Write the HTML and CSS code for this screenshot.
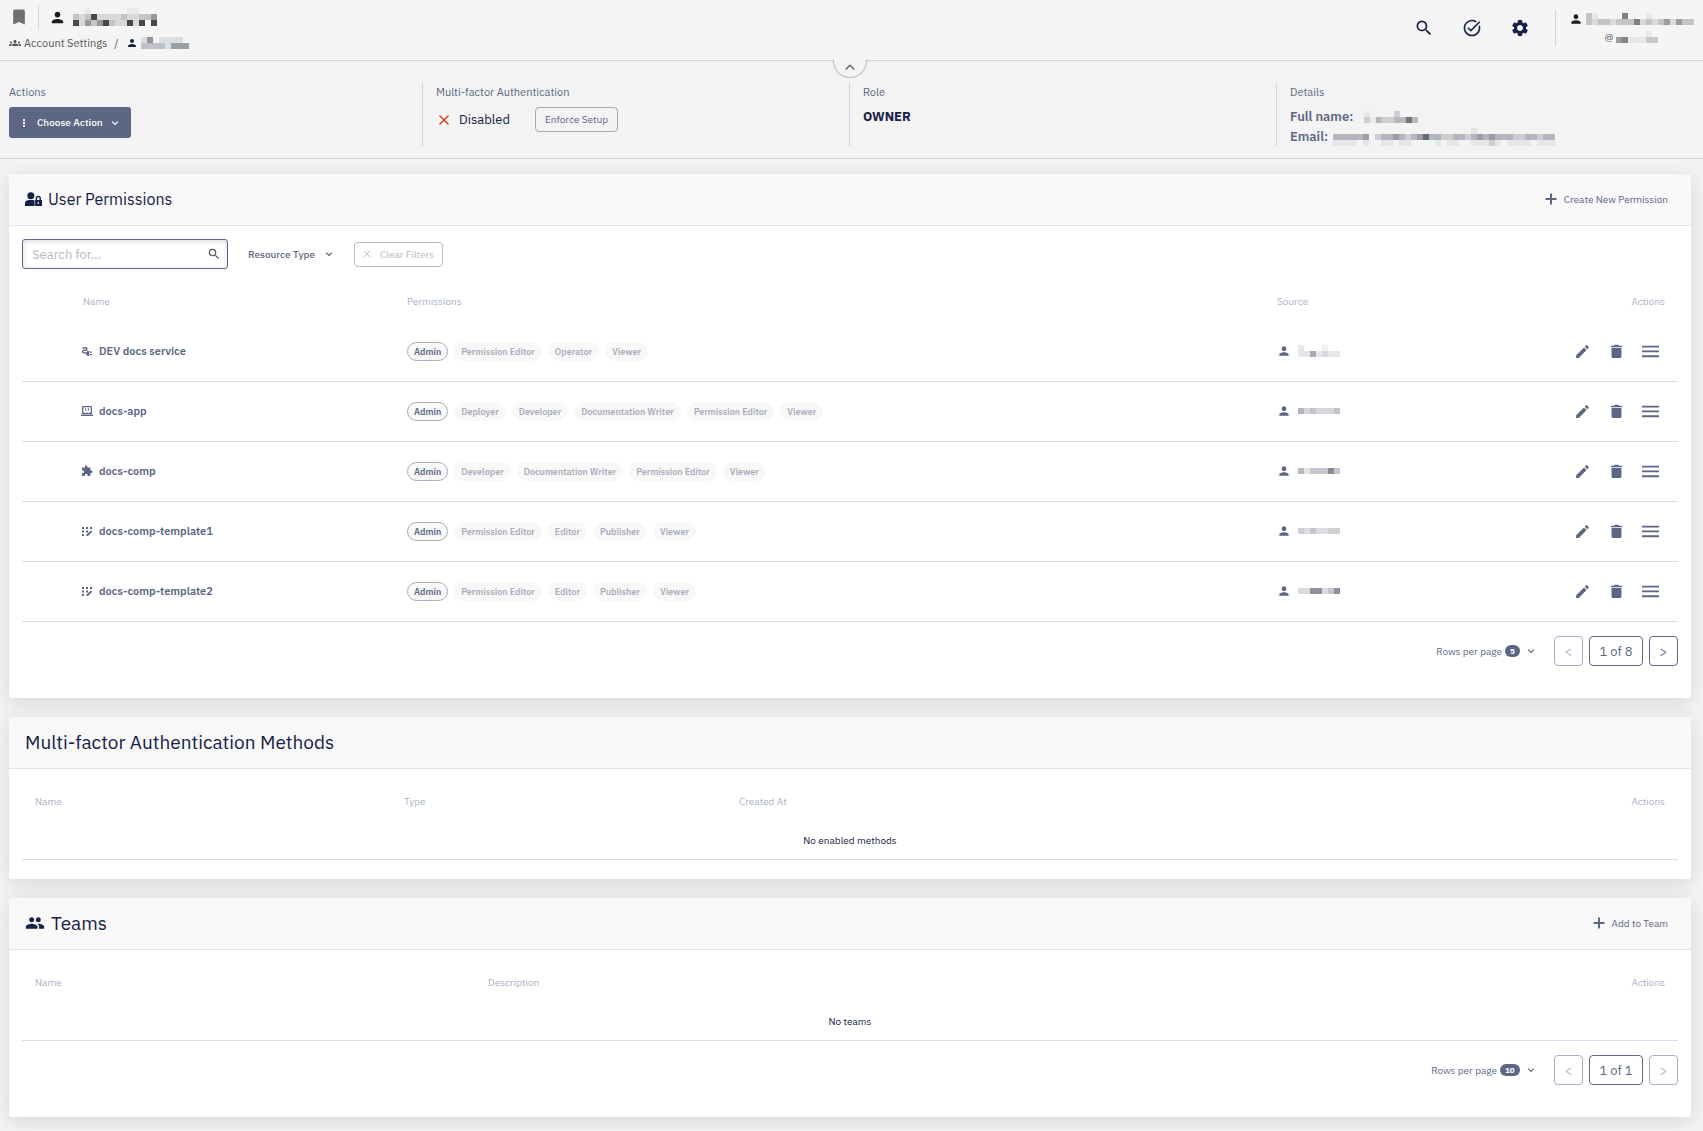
FILE: index.html
```html
<!DOCTYPE html>
<html lang="en">
<head>
  <meta charset="UTF-8">
  <title>Account Settings</title>
  <link rel="stylesheet" href="styles.css">
</head>
<body>

<!-- shared icons -->
<svg class="sprite" aria-hidden="true">
  <symbol id="i-person" viewBox="0 0 24 24"><path d="M12 12c2.21 0 4-1.79 4-4s-1.79-4-4-4-4 1.79-4 4 1.79 4 4 4zm0 2c-2.67 0-8 1.34-8 4v2h16v-2c0-2.66-5.33-4-8-4z"/></symbol>
  <symbol id="i-search" viewBox="0 0 24 24"><path d="M15.5 14h-.79l-.28-.27A6.47 6.47 0 0 0 16 9.5 6.5 6.5 0 1 0 9.5 16c1.61 0 3.09-.59 4.23-1.57l.27.28v.79l5 4.99L20.49 19l-4.99-5zm-6 0C7.01 14 5 11.99 5 9.5S7.01 5 9.5 5 14 7.01 14 9.5 11.99 14 9.5 14z"/></symbol>
  <symbol id="i-edit" viewBox="0 0 24 24"><path d="M3 17.25V21h3.75L17.81 9.94l-3.75-3.75L3 17.25zM20.71 7.04c.39-.39.39-1.02 0-1.41l-2.34-2.34c-.39-.39-1.02-.39-1.41 0l-1.83 1.83 3.75 3.75 1.83-1.83z"/></symbol>
  <symbol id="i-delete" viewBox="0 0 24 24"><path d="M5 19c0 1.1.9 2 2 2h10c1.1 0 2-.9 2-2V7H5v12zM20 4h-4.500l-1-1.500h-5l-1 1.500H4v2h16V4z"/></symbol>
  <symbol id="i-menu" viewBox="0 0 16 16"><path d="M0 2.500h16v1.800H0zM0 7h16v1.800H0zM0 11.500h16v1.800H0z"/></symbol>
  <symbol id="i-down" viewBox="0 0 12 12"><path d="M2.500 4.300 6 7.700l3.500-3.400" fill="none" stroke="currentColor" stroke-width="1.5"/></symbol>
  <symbol id="i-cross" viewBox="0 0 12 12"><path d="M1.500 1.500l9 9m0-9l-9 9" fill="none" stroke="currentColor" stroke-width="1.4"/></symbol>
  <symbol id="i-plus" viewBox="0 0 12 12"><path d="M5 .5h2V5h4.500v2H7v4.500H5V7H.5V5H5z"/></symbol>
  <symbol id="i-template" viewBox="0 0 12 12"><path d="M1 2h2v2H1zM5 2h2v2H5zM9 2h2v2H9zM1 5.500h2v2H1zM5 5.500h2v2H5zM1 9h2v2H1zM10 5.500l1.200 1.200L7 11H5.500V9.600z"/></symbol>
</svg>

<header class="topbar">
  <div class="titles">
    <div class="title-row">
      <button class="icon-btn" aria-label="Bookmark"><svg class="icon-20 bookmark" viewBox="0 0 24 24"><path d="M17 3H7c-1.100 0-2 .9-2 2v16l7-3 7 3V5c0-1.100-.9-2-2-2z"/></svg></button>
      <span class="divider"></span>
      <svg class="icon-16 black"><use href="#i-person"/></svg>
      <svg class="mask" width="84" height="18" viewBox="0 0 14 3">
        <path fill="#eaeaea" d="M2 0h1v1H2zM9 0h2v1H9z"/>
        <path fill="#d9d9d9" d="M0 1h14v1H0zM1 2h1v1H1zM7 2h2v1H7zM10 2h1v1h-1z"/>
        <path fill="#c4c4c4" d="M0 1h1v1H0zM2 1h1v1H2zM8 1h1v1H8zM11 1h2v1h-2zM3 2h1v1H3zM6 2h1v1H6z"/>
        <path fill="#999" d="M13 1h1v1h-1zM2 2h1v1H2zM4 2h1v1H4z"/>
        <path fill="#484848" d="M3 1h1v1H3zM0 2h1v1H0zM5 2h1v1H5zM9 2h1v1H9zM11 2h1v1h-1zM13 2h1v1h-1z"/>
      </svg>
    </div>
    <nav class="crumbs">
      <svg class="icon-12" viewBox="0 0 24 24"><path d="M12 12.750c1.630 0 3.070.39 4.240.9 1.080.48 1.760 1.560 1.760 2.730V18H6v-1.610c0-1.180.68-2.260 1.760-2.730 1.170-.52 2.610-.91 4.240-.91zM4 13c1.100 0 2-.9 2-2s-.9-2-2-2-2 .9-2 2 .9 2 2 2zm1.130 1.100c-.37-.06-.74-.1-1.130-.1-.99 0-1.930.21-2.780.58C.48 14.900 0 15.620 0 16.430V18h4.500v-1.610c0-.83.23-1.610.63-2.290zM20 13c1.100 0 2-.9 2-2s-.9-2-2-2-2 .9-2 2 .9 2 2 2zm4 3.430c0-.81-.48-1.530-1.220-1.850-.85-.37-1.790-.58-2.780-.58-.39 0-.76.04-1.130.1.4.68.63 1.460.63 2.290V18H24v-1.570zM12 6c1.660 0 3 1.340 3 3s-1.340 3-3 3-3-1.340-3-3 1.340-3 3-3z"/></svg>
      <a href="#">Account Settings</a>
      <span class="slash">/</span>
      <svg class="icon-12 navy"><use href="#i-person"/></svg>
      <svg class="mask" width="48" height="12" viewBox="0 0 8 2">
        <path fill="#dcdde0" d="M0 0h1v1H0zM3 0h4v1H3zM4 1h1v1H4z"/>
        <path fill="#9094a0" d="M1 0h1v1H1z"/>
        <path fill="#c0c1c6" d="M0 1h4v1H0z"/>
        <path fill="#999da4" d="M5 1h3v1H5z"/>
      </svg>
    </nav>
  </div>
  <div class="tools">
    <button class="icon-btn" aria-label="Search"><svg class="icon-20"><use href="#i-search"/></svg></button>
    <button class="icon-btn" aria-label="Tasks"><svg class="icon-20" viewBox="0 0 24 24"><path d="M22 5.180L10.590 16.600l-4.240-4.240 1.410-1.410 2.830 2.830 10-10L22 5.180zM19.790 10.220c.13.57.21 1.170.21 1.780 0 4.420-3.580 8-8 8s-8-3.580-8-8 3.580-8 8-8c1.580 0 3.040.46 4.280 1.250l1.440-1.440C16.100 2.670 14.130 2 12 2 6.480 2 2 6.480 2 12s4.480 10 10 10 10-4.480 10-10c0-1.190-.22-2.330-.6-3.390l-1.610 1.610z"/></svg></button>
    <button class="icon-btn" aria-label="Settings"><svg class="icon-20" viewBox="0 0 24 24"><path d="M19.140 12.940c.04-.3.06-.61.06-.94 0-.32-.02-.64-.07-.94l2.030-1.580c.18-.14.23-.41.12-.61l-1.920-3.320c-.12-.22-.37-.29-.59-.22l-2.390.96c-.5-.38-1.030-.7-1.620-.94l-.36-2.540c-.04-.24-.24-.41-.48-.41h-3.840c-.24 0-.43.17-.47.41l-.36 2.540c-.59.24-1.130.57-1.620.94l-2.390-.96c-.22-.08-.47 0-.59.22L2.740 8.870c-.12.21-.08.47.12.61l2.030 1.580c-.05.3-.09.63-.09.94s.02.64.07.94l-2.030 1.580c-.18.14-.23.41-.12.61l1.920 3.320c.12.22.37.29.59.22l2.390-.96c.5.38 1.030.7 1.620.94l.36 2.540c.05.24.24.41.48.41h3.840c.24 0 .44-.17.47-.41l.36-2.540c.59-.24 1.130-.56 1.620-.94l2.390.96c.22.08.47 0 .59-.22l1.920-3.320c.12-.22.07-.47-.12-.61l-2.010-1.580zM12 15.600c-1.980 0-3.600-1.620-3.600-3.600s1.620-3.600 3.600-3.600 3.600 1.620 3.600 3.600-1.620 3.600-3.600 3.600z"/></svg></button>
    <div class="account">
      <div class="account-row">
        <svg class="icon-14 black"><use href="#i-person"/></svg>
        <svg class="mask" width="108" height="12" viewBox="0 0 18 2">
          <path fill="#e8e8e8" d="M1 0h1v1H1zM10 0h1v1h-1z"/>
          <path fill="#c4c4c4" d="M0 0h1v1H0zM0 1h18v1H0z"/>
          <path fill="#dadada" d="M1 1h1v1H1zM4 1h1v1H4zM9 1h1v1H9zM11 1h1v1h-1zM14 1h1v1h-1z"/>
          <path fill="#9c9c9c" d="M13 1h1v1h-1zM15 1h1v1h-1z"/>
          <path fill="#808080" d="M6 0h1v1H6zM8 1h1v1H8z"/>
        </svg>
      </div>
      <div class="account-row">
        <span>@</span>
        <svg class="mask" width="42" height="12" viewBox="0 0 7 2">
          <path fill="#e8e8e8" d="M5 0h1v1H5zM2 1h3v1H2z"/>
          <path fill="#9c9c9c" d="M0 1h1v1H0z"/>
          <path fill="#848484" d="M1 1h1v1H1z"/>
          <path fill="#c8c8c8" d="M5 1h2v1H5z"/>
        </svg>
      </div>
    </div>
  </div>
</header>

<section class="summary">
  <button class="collapse" aria-label="Collapse"><svg class="icon-12" viewBox="0 0 14 14"><path d="M2 10l5-5 5 5" fill="none" stroke="#666" stroke-width="1.800"/></svg></button>
  <div class="cell">
    <h2>Actions</h2>
    <button class="primary">
      <svg class="icon-12" viewBox="0 0 12 12"><path d="M5 2h2v2H5zM5 5h2v2H5zM5 8h2v2H5z"/></svg>
      Choose Action
      <svg class="icon-10"><use href="#i-down"/></svg>
    </button>
  </div>
  <div class="cell">
    <h2>Multi-factor Authentication</h2>
    <div class="mfa">
      <svg class="icon-12 red"><use href="#i-cross"/></svg>
      <span class="state">Disabled</span>
      <button class="outline">Enforce Setup</button>
    </div>
  </div>
  <div class="cell">
    <h2>Role</h2>
    <p class="role">OWNER</p>
  </div>
  <div class="cell">
    <h2>Details</h2>
    <p class="detail">Full name:
      <svg class="mask name-mask" width="54" height="12" viewBox="0 0 9 2">
        <path fill="#e8e9ea" d="M0 0h1v1H0zM1 1h1v1H1z"/>
        <path fill="#cdced1" d="M5 0h1v1H5zM0 1h1v1H0zM3 1h2v1H3z"/>
        <path fill="#b6b8be" d="M2 1h1v1H2zM5 1h2v1H5zM8 1h1v1H8z"/>
        <path fill="#71757f" d="M7 1h1v1H7z"/>
      </svg>
    </p>
    <p class="detail">Email:
      <svg class="mask" width="222" height="18" viewBox="0 -1 37 3">
        <path fill="#e4e4e5" d="M23 -1h1v1h-1z"/>
        <path fill="#b4b6bd" d="M0 0h6v1H0zM7 0h30v1H7z"/>
        <path fill="#e6e6e7" d="M0 1h4v1H0zM5 1h1v1H5zM8 1h2v1H8zM11 1h2v1h-2zM17 1h1v1h-1zM19 1h2v1h-2zM23 1h5v1h-5zM29 1h4v1h-4zM34 1h3v1h-3z"/>
        <path fill="#ccced2" d="M7 0h1v1H7zM12 0h1v1h-1zM18 0h2v1h-2zM22 0h1v1h-1zM30 0h2v1h-2zM34 0h1v1h-1zM26 1h1v1h-1z"/>
        <path fill="#9b9ea6" d="M5 0h1v1H5zM10 0h1v1h-1zM14 0h1v1h-1zM24 0h1v1h-1zM26 0h1v1h-1z"/>
        <path fill="#646a7c" d="M15 0h1v1h-1z"/>
      </svg>
    </p>
  </div>
</section>

<main>
  <section class="card">
    <div class="card-head">
      <svg class="icon-16 navy" viewBox="0 0 16 16"><circle cx="5.500" cy="4.500" r="3.300"/><path d="M0 14v-2.500C0 9.500 2 8.500 4 8.500h3.500c.8 0 1.300.2 1.500.5v5zM10 8.500V7a2.500 2.500 0 0 1 5 0v1.500h1V14H9.500V8.500zm1.300 0h2.400V7a1.200 1.200 0 0 0-2.400 0zm.5 2v1.500h1.400v-1.500z" fill-rule="evenodd"/></svg>
      <h1>User Permissions</h1>
      <button class="link"><svg class="icon-12"><use href="#i-plus"/></svg>Create New Permission</button>
    </div>
    <div class="card-body">
      <div class="filters">
        <div class="search">
          <input type="text" placeholder="Search for..." aria-label="Search for">
          <svg class="icon-14 grey"><use href="#i-search"/></svg>
        </div>
        <div class="picker">
          <select class="resource" aria-label="Resource Type"><option>Resource Type</option></select>
          <svg class="icon-10"><use href="#i-down"/></svg>
        </div>
        <button class="outline" disabled><svg class="icon-8"><use href="#i-cross"/></svg>Clear Filters</button>
      </div>
      <table class="permissions">
        <thead>
          <tr><th class="col-name">Name</th><th>Permissions</th><th class="col-source">Source</th><th class="col-actions">Actions</th></tr>
        </thead>
        <tbody>
          <tr>
            <td><div class="resource-name"><svg class="icon-12" viewBox="0 0 12 12"><path d="M1.500 3h4.200v2.300H2.800a1.200 1.200 0 0 0 0 2.500H5" fill="none" stroke="currentColor" stroke-width="1.300"/><path d="M5 7.800 6.500 6H8v5H6.500L5 9.300zM8.500 6.500H11v1.300H8.500zM8.500 9H11v1.300H8.500z"/></svg>DEV docs service</div></td>
            <td><ul class="chips"><li class="on">Admin</li><li>Permission Editor</li><li>Operator</li><li>Viewer</li></ul></td>
            <td><div class="source"><svg class="icon-14"><use href="#i-person"/></svg><svg class="mask" width="42" height="12" viewBox="0 0 7 2"><path fill="#e6e7ea" d="M0 0h1v2H0zM1 1h1v1H1zM3 1h1v1H3zM5 1h2v1H5z"/><path fill="#f1f1f2" d="M4 0h1v1H4z"/><path fill="#d8dadd" d="M4 1h1v1H4z"/><path fill="#a7abb8" d="M2 1h1v1H2z"/></svg></div></td>
            <td><div class="row-actions"><button class="icon-btn" aria-label="Edit"><svg class="icon-16"><use href="#i-edit"/></svg></button><button class="icon-btn" aria-label="Delete"><svg class="icon-16"><use href="#i-delete"/></svg></button><button class="icon-btn" aria-label="More"><svg class="icon-16"><use href="#i-menu"/></svg></button></div></td>
          </tr>
          <tr>
            <td><div class="resource-name"><svg class="icon-12" viewBox="0 0 12 12"><path d="M2 1h8q1 0 1 1v7H1V2q0-1 1-1zm.3 1.300v5.400h7.400V2.300zM4 3.500h1.200v2H4zm2.800 0H8v2H6.800zM0 9.500h12V11H0z" fill-rule="evenodd"/></svg>docs-app</div></td>
            <td><ul class="chips"><li class="on">Admin</li><li>Deployer</li><li>Developer</li><li>Documentation Writer</li><li>Permission Editor</li><li>Viewer</li></ul></td>
            <td><div class="source"><svg class="icon-14"><use href="#i-person"/></svg><svg class="mask" width="42" height="6" viewBox="0 0 7 1"><path fill="#d6d7db" d="M0 0h7v1H0z"/><path fill="#b3b5be" d="M0 0h1v1H0z"/><path fill="#c3c5cc" d="M2 0h1v1H2zM6 0h1v1H6z"/></svg></div></td>
            <td><div class="row-actions"><button class="icon-btn" aria-label="Edit"><svg class="icon-16"><use href="#i-edit"/></svg></button><button class="icon-btn" aria-label="Delete"><svg class="icon-16"><use href="#i-delete"/></svg></button><button class="icon-btn" aria-label="More"><svg class="icon-16"><use href="#i-menu"/></svg></button></div></td>
          </tr>
          <tr>
            <td><div class="resource-name"><svg class="icon-12" viewBox="0 0 24 24"><path d="M20.500 11H19V7c0-1.100-.9-2-2-2h-4V3.500C13 2.120 11.880 1 10.500 1S8 2.120 8 3.500V5H4c-1.100 0-1.990.9-1.990 2v3.800H3.500c1.490 0 2.700 1.210 2.700 2.700s-1.210 2.700-2.700 2.700H2V20c0 1.100.9 2 2 2h3.800v-1.500c0-1.490 1.210-2.700 2.700-2.700s2.700 1.210 2.700 2.700V22H17c1.100 0 2-.9 2-2v-4h1.500c1.380 0 2.500-1.120 2.500-2.500S21.880 11 20.500 11z"/></svg>docs-comp</div></td>
            <td><ul class="chips"><li class="on">Admin</li><li>Developer</li><li>Documentation Writer</li><li>Permission Editor</li><li>Viewer</li></ul></td>
            <td><div class="source"><svg class="icon-14"><use href="#i-person"/></svg><svg class="mask" width="42" height="6" viewBox="0 0 7 1"><path fill="#c3c7cd" d="M0 0h7v1H0z"/><path fill="#b8b8be" d="M0 0h1v1H0z"/><path fill="#e4e4e7" d="M1 0h1v1H1z"/><path fill="#888b95" d="M5 0h1v1H5z"/></svg></div></td>
            <td><div class="row-actions"><button class="icon-btn" aria-label="Edit"><svg class="icon-16"><use href="#i-edit"/></svg></button><button class="icon-btn" aria-label="Delete"><svg class="icon-16"><use href="#i-delete"/></svg></button><button class="icon-btn" aria-label="More"><svg class="icon-16"><use href="#i-menu"/></svg></button></div></td>
          </tr>
          <tr>
            <td><div class="resource-name"><svg class="icon-12"><use href="#i-template"/></svg>docs-comp-template1</div></td>
            <td><ul class="chips"><li class="on">Admin</li><li>Permission Editor</li><li>Editor</li><li>Publisher</li><li>Viewer</li></ul></td>
            <td><div class="source"><svg class="icon-14"><use href="#i-person"/></svg><svg class="mask" width="42" height="6" viewBox="0 0 7 1"><path fill="#dcdde1" d="M0 0h7v1H0z"/><path fill="#c3c6cb" d="M2 0h1v1H2z"/><path fill="#cfcfd4" d="M0 0h1v1H0zM5 0h2v1H5z"/></svg></div></td>
            <td><div class="row-actions"><button class="icon-btn" aria-label="Edit"><svg class="icon-16"><use href="#i-edit"/></svg></button><button class="icon-btn" aria-label="Delete"><svg class="icon-16"><use href="#i-delete"/></svg></button><button class="icon-btn" aria-label="More"><svg class="icon-16"><use href="#i-menu"/></svg></button></div></td>
          </tr>
          <tr>
            <td><div class="resource-name"><svg class="icon-12"><use href="#i-template"/></svg>docs-comp-template2</div></td>
            <td><ul class="chips"><li class="on">Admin</li><li>Permission Editor</li><li>Editor</li><li>Publisher</li><li>Viewer</li></ul></td>
            <td><div class="source"><svg class="icon-14"><use href="#i-person"/></svg><svg class="mask" width="42" height="6" viewBox="0 0 7 1"><path fill="#d8d9dd" d="M0 0h7v1H0z"/><path fill="#8e919e" d="M2 0h2v1H2zM6 0h1v1H6z"/><path fill="#c6c7cc" d="M5 0h1v1H5z"/></svg></div></td>
            <td><div class="row-actions"><button class="icon-btn" aria-label="Edit"><svg class="icon-16"><use href="#i-edit"/></svg></button><button class="icon-btn" aria-label="Delete"><svg class="icon-16"><use href="#i-delete"/></svg></button><button class="icon-btn" aria-label="More"><svg class="icon-16"><use href="#i-menu"/></svg></button></div></td>
          </tr>
        </tbody>
      </table>
      <div class="pager">
        <div class="picker rows">
          <label for="perm-rows">Rows per page</label>
          <select id="perm-rows" class="badge"><option>5</option></select>
          <svg class="icon-10"><use href="#i-down"/></svg>
        </div>
        <button class="page" disabled>&lt;</button>
        <button class="page current">1 of 8</button>
        <button class="page">&gt;</button>
      </div>
    </div>
  </section>

  <section class="card">
    <div class="card-head">
      <h1 class="large">Multi-factor Authentication Methods</h1>
    </div>
    <div class="card-body last-row">
      <table class="methods">
        <thead>
          <tr><th class="col-name">Name</th><th class="col-type">Type</th><th>Created At</th><th class="col-actions">Actions</th></tr>
        </thead>
        <tbody>
          <tr><td colspan="4" class="empty">No enabled methods</td></tr>
        </tbody>
      </table>
    </div>
  </section>

  <section class="card">
    <div class="card-head">
      <svg class="icon-20 navy" viewBox="0 0 24 24"><path d="M16 11c1.660 0 2.990-1.340 2.990-3S17.660 5 16 5s-3 1.340-3 3 1.340 3 3 3zm-8 0c1.660 0 2.990-1.340 2.990-3S9.660 5 8 5 5 6.340 5 8s1.340 3 3 3zm0 2c-2.330 0-7 1.170-7 3.500V19h14v-2.500c0-2.330-4.670-3.500-7-3.500zm8 0c-.29 0-.62.02-.97.05 1.160.84 1.970 1.970 1.970 3.450V19h6v-2.500c0-2.330-4.670-3.500-7-3.500z"/></svg>
      <h1 class="large">Teams</h1>
      <button class="link"><svg class="icon-12"><use href="#i-plus"/></svg>Add to Team</button>
    </div>
    <div class="card-body">
      <table class="teams">
        <thead>
          <tr><th class="col-name">Name</th><th>Description</th><th class="col-actions">Actions</th></tr>
        </thead>
        <tbody>
          <tr><td colspan="3" class="empty">No teams</td></tr>
        </tbody>
      </table>
      <div class="pager">
        <div class="picker rows">
          <label for="team-rows">Rows per page</label>
          <select id="team-rows" class="badge"><option>10</option></select>
          <svg class="icon-10"><use href="#i-down"/></svg>
        </div>
        <button class="page" disabled>&lt;</button>
        <button class="page current">1 of 1</button>
        <button class="page" disabled>&gt;</button>
      </div>
    </div>
  </section>
</main>

</body>
</html>
```

FILE: styles.css
```css
* { box-sizing: border-box; }
body { margin: 0; font-family: "IBM Plex Sans", Roboto, sans-serif; font-size: 10px; color: #5d6783; background: #f3f3f3; }
h1, h2, p, ul { margin: 0; padding: 0; font-weight: 400; }
button, input, select { font: inherit; color: inherit; }
button { display: inline-flex; align-items: center; justify-content: center; cursor: pointer; padding: 0; background: none; border: 0; white-space: nowrap; }
svg { display: block; flex: none; fill: currentColor; }
.sprite { width: 0; height: 0; position: absolute; }
.mask { shape-rendering: crispEdges; }
.icon-8 { width: 8px; height: 8px; }
.icon-10 { width: 10px; height: 10px; }
.icon-12 { width: 12px; height: 12px; }
.icon-14 { width: 14px; height: 14px; }
.icon-16 { width: 17px; height: 17px; }
.icon-20 { width: 20px; height: 20px; }
.black { color: #1c1c1c; }
.navy { color: #152144; }
.grey { color: #555; }
.red { color: #ee3311; }

/* top bar */
.topbar { display: flex; justify-content: space-between; height: 61px; padding: 5px 9px; background: #f5f5f5; border-bottom: 1px solid #d3d3d6; }
.title-row { display: flex; align-items: center; height: 24px; }
.bookmark { color: #6f6f6f; }
.title-row .divider { width: 1px; height: 24px; margin: 0 10px 0 9px; background: #d3d3d6; }
.title-row .mask { margin: 0 7px; }
.crumbs { display: flex; align-items: center; gap: 3px; height: 28px; font-size: 11px; color: #555; }
.crumbs a { color: inherit; text-decoration: none; }
.slash { margin: 0 4px; }
.tools { display: flex; align-items: center; gap: 28px; height: 46px; color: #152144; }
.account { display: flex; flex-direction: column; align-items: center; justify-content: space-between; height: 36px; margin-left: -3px; padding-left: 13px; border-left: 1px solid #d3d3d6; color: #555; }
.account-row { display: flex; align-items: center; gap: 3px; height: 18px; }

/* summary strip */
.summary { position: relative; display: grid; grid-template-columns: 422fr 427fr 427fr 427fr; padding: 22px 0 12px; border-bottom: 1px solid #d3d3d6; }
.collapse { position: absolute; top: -1px; left: 50%; width: 34px; height: 18px; margin-left: -19px; padding-bottom: 4px; background: #f4f4f4; border: 1px solid #b4b8c8; border-top: 0; border-radius: 0 0 18px 18px; }
.cell { height: 63px; padding-left: 13px; border-left: 1px solid #d3d3d6; }
.cell:nth-of-type(1) { padding-left: 9px; border-left: 0; }
.cell h2 { font-size: 11px; line-height: 18px; margin-bottom: 6px; }
.primary { gap: 7px; height: 31px; padding: 0 11px 0 9px; font-weight: 500; color: #fff; background: #5d6783; border-radius: 3px; }
.outline { height: 25px; padding: 0 9px; border: 1px solid #a4a9ba; border-radius: 4px; }
.outline:disabled { gap: 9px; padding: 0 8px; color: #b9b9b9; border-color: #b9b9b9; }
.mfa { display: flex; align-items: center; height: 25px; padding-left: 2px; }
.state { margin: 0 25px 0 9px; font-size: 13px; color: #152144; }
.role { font-size: 13px; line-height: 20px; font-weight: 700; color: #152144; }
.detail { display: flex; align-items: center; gap: 5px; font-size: 13px; line-height: 20px; font-weight: 600; }
.name-mask { margin-left: 6px; }

/* cards */
main { display: grid; gap: 19px; padding: 15px 12px 12px 9px; }
.card { background: #fff; border-radius: 3px; box-shadow: 0 4px 20px rgba(0, 0, 0, .12); }
.card-head { display: flex; align-items: center; gap: 6px; height: 52px; padding: 0 23px 1px 16px; background: #f8f8f8; border-bottom: 1px solid #e1e2ea; border-radius: 3px 3px 0 0; }
h1 { font-size: 16px; color: #152144; }
h1.large { font-size: 19px; }
.link { gap: 7px; margin-left: auto; }
.card-body { padding: 13px 13px 32px; }
.card-body.last-row { padding-bottom: 19px; }

.filters { display: flex; align-items: center; gap: 20px; height: 30px; margin-bottom: 13px; }
.search { display: flex; align-items: center; width: 206px; height: 30px; padding-right: 6px; border: 1px solid #5d6783; border-radius: 3px; box-shadow: inset 0 1px 5px rgba(93, 103, 131, .25); }
.search input { flex: 1; min-width: 0; padding: 0 9px; font-size: 13px; background: none; border: 0; outline: 0; }
.search input::placeholder { color: #b9b9b9; }
.picker { display: flex; align-items: center; }
.picker select { appearance: none; padding: 0; background: none; border: 0; cursor: pointer; }
.resource { margin-right: 8px; font-weight: 500; }

table { width: 100%; table-layout: fixed; border-spacing: 0; }
th { height: 40px; padding: 0 13px 1px; font-weight: 400; text-align: left; color: #a9b0c5; }
td { height: 60px; padding: 0 13px 1px; border-bottom: 1px solid #dcdddf; }
.permissions .col-name { width: 372px; padding-left: 61px; }
.permissions .col-source { width: 193px; }
.permissions .col-actions { width: 221px; }
.methods .col-name { width: 369px; }
.methods .col-type { width: 335px; }
.teams .col-name { width: 453px; }
th.col-actions { text-align: right; }
td.empty { height: 38px; text-align: center; color: #152144; }
.resource-name { display: flex; align-items: center; gap: 6px; padding-left: 46px; font-size: 11px; font-weight: 600; }
.chips { display: flex; gap: 6px; list-style: none; }
.chips li { height: 19px; padding: 0 6px; font-size: 9px; line-height: 17px; font-weight: 600; color: #a9adbb; background: #f8f8f8; border: 1px solid #f8f8f8; border-radius: 10px; white-space: nowrap; }
.chips .on { color: #5d6783; border-color: #a9adbd; }
.source { display: flex; align-items: center; gap: 7px; }
.row-actions { display: flex; justify-content: flex-end; gap: 12px; padding-right: 4px; }
.row-actions .icon-btn { width: 22px; height: 22px; }

.pager { display: flex; align-items: center; justify-content: flex-end; gap: 6px; padding-top: 14px; }
.rows { gap: 3px; margin-right: 12px; }
.picker .badge { height: 12px; padding: 0 5px; font-size: 8px; line-height: 12px; font-weight: 700; color: #fff; background: #5d6783; border-radius: 6px; }
.rows svg { margin-left: 3px; }
.page { width: 29px; height: 30px; font-size: 13px; border: 1px solid #5d6783; border-radius: 4px; }
.page:disabled { color: #a9b0c5; border-color: #a9b0c5; }
.page.current { width: 54px; }
```
